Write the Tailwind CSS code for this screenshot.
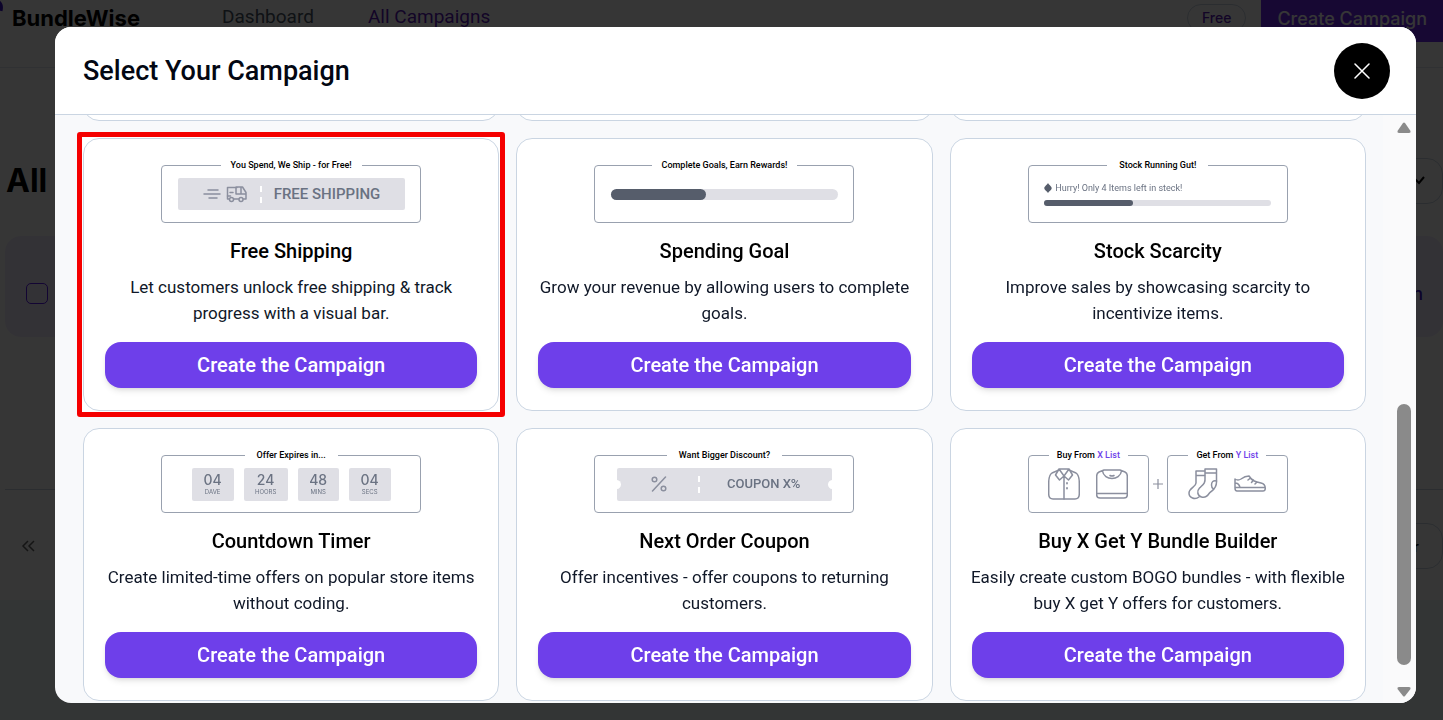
<!DOCTYPE html>
<html lang="en">

<head>
  <meta charset="UTF-8" />
  <meta name="viewport" content="width=device-width, initial-scale=1.0" />
  <title>BundleWise - All Campaigns</title>
  <script src="https://cdn.jsdelivr.net/npm/@tailwindcss/browser@4"></script>
</head>

<body class="h-screen overflow-hidden bg-[#f2f8fa] font-['Inter','Liberation_Sans',sans-serif] text-black">

  <!-- Page behind the modal -->
  <header class="flex h-[68px] items-start border-b border-slate-200 bg-white">
    <svg class="h-4 w-3 shrink-0" viewBox="0 0 12 16" fill="none" stroke="#3b12c9" stroke-width="3"><path d="M-2 1C1 3 2 7 1 11" /></svg>
    <a href="#" class="pt-1 text-[22px] leading-7 font-bold">BundleWise</a>
    <nav class="ml-[82px] flex gap-[54px] pt-1 font-['Roboto',sans-serif] text-[19px] leading-[26px]">
      <a href="#" class="text-gray-600">Dashboard</a>
      <a href="#" class="text-[#5b18b8]">All Campaigns</a>
    </nav>
    <span class="mt-1 mr-[15px] ml-auto rounded-full border border-slate-300 px-[14px] text-[14px] leading-[26px] font-medium text-[#5b18b8]">Free</span>
    <button class="h-[42px] bg-[#6d28f0] px-4 pb-[6px] text-[18px] font-medium text-white">Create Campaign</button>
  </header>

  <main class="h-[532px] bg-white">
    <div class="flex items-center justify-between pt-[89px] pl-[6px]">
      <h1 class="text-[32px] leading-[48px] font-bold">All</h1>
      <button aria-label="Filter" class="flex h-[46px] w-28 items-center justify-end rounded-2xl border border-slate-300 pr-4">
        <svg class="h-3 w-3" viewBox="0 0 12 12" fill="none" stroke="currentColor" stroke-width="2"><path d="M1 4l4 4 5-6" /></svg>
      </button>
    </div>
    <div class="mt-[31px] ml-[5px] flex h-[101px] items-center justify-between rounded-2xl bg-[#f2ecff] pt-[13px] pl-[21px]">
      <input type="checkbox" aria-label="Select campaign" class="h-[21px] w-[22px] appearance-none rounded-[5px] border border-[#5b18f0]" />
      <a href="#" class="pr-5 text-[18px] font-medium text-[#3b12c9]">Campaign</a>
    </div>
    <div class="mt-[152px] ml-[5px] flex items-center justify-between border-t border-slate-300 pt-[33px] pl-4">
      <button aria-label="First page">
        <svg class="h-4 w-4" viewBox="0 0 16 16" fill="none" stroke="#666" stroke-width="1.5"><path d="M7 3L2 8l5 5M13 3L8 8l5 5" /></svg>
      </button>
      <button class="h-[46px] rounded-2xl border border-slate-300 pr-[23px] pl-6 text-[14px] font-medium">Filter</button>
    </div>
  </main>

  <!-- Modal -->
  <div class="fixed inset-0 bg-black/79 pt-[27px] pr-[27px] pb-[17px] pl-[55px] font-['Roboto','Liberation_Sans',sans-serif]">
    <section role="dialog" aria-labelledby="modal-title" class="flex h-full flex-col overflow-hidden rounded-2xl bg-[#f8f9fb]">
      <div class="flex h-[88px] shrink-0 items-center justify-between border-b border-slate-300 bg-white pr-[26px] pl-7">
        <h2 id="modal-title" class="text-[27px] leading-8 font-medium text-gray-950">Select Your Campaign</h2>
        <button aria-label="Close" class="flex h-14 w-14 items-center justify-center rounded-full bg-black text-white">
          <svg class="h-4 w-4" viewBox="0 0 16 16" fill="none" stroke="currentColor" stroke-width="1.5" stroke-linecap="round"><path d="M1 1l14 14M15 1L1 15" /></svg>
        </button>
      </div>

      <div class="flex min-h-0 flex-1">
        <div class="flex flex-1 flex-col justify-end overflow-hidden pr-[17px] pb-[2px] pl-7">
          <div class="grid grid-cols-3 gap-x-[17px] gap-y-[17px]">

            <!-- Row scrolled out of view -->
            <div class="h-[273px] rounded-2xl border border-slate-300 bg-white"></div>
            <div class="h-[273px] rounded-2xl border border-slate-300 bg-white"></div>
            <div class="h-[273px] rounded-2xl border border-slate-300 bg-white"></div>

            <!-- Free Shipping -->
            <div class="relative">
              <div class="absolute -inset-[6px] rounded-[3px] border-[5px] border-[#f50000] bg-white"></div>
              <article class="relative flex flex-col items-center rounded-2xl border border-slate-300 bg-white px-[21px] pt-[26px] pb-[22px] text-center">
                <div class="relative flex h-[58px] w-[260px] items-center justify-center rounded-[4px] border border-gray-400">
                  <p class="absolute -top-[7px] bg-white px-[10px] text-[9px] leading-3 font-medium whitespace-nowrap">You Spend, We Ship - for Free!</p>
                  <div class="flex h-8 w-[227px] items-center rounded-[2px] bg-[#dfdfe5] pl-[25px] text-gray-500">
                    <svg class="h-5 w-[45px]" viewBox="0 0 45 20" fill="none" stroke="#8b8f9e" stroke-width="1.5" stroke-linecap="round" stroke-linejoin="round">
                      <path d="M5 6h10M1 10h16M6 14h8" />
                      <path d="M26 15h-1.500V3.500H34M31 15h4.500M40.500 15H43V8.500L39.500 3H33v7h10M38 3.500V10" />
                      <path d="M27 8.500h3M24.500 12h3" />
                      <circle cx="28.500" cy="15.500" r="2" /><circle cx="38" cy="15.500" r="2" />
                    </svg>
                    <span class="ml-3 h-[17px] border-l-2 border-dashed border-white"></span>
                    <span class="ml-3 text-[15px] leading-5 font-medium">FREE SHIPPING</span>
                  </div>
                </div>
                <h3 class="mt-[14px] text-[20px] leading-7 font-medium">Free Shipping</h3>
                <p class="-mx-2 mt-[9px] text-[17px] leading-[26px] text-gray-900">Let customers unlock free shipping &amp; track progress with a visual bar.</p>
                <button class="mt-4 h-[46px] w-full rounded-2xl bg-[#6e3fea] text-[20px] font-medium text-white shadow-md">Create the Campaign</button>
              </article>
            </div>

            <!-- Spending Goal -->
            <article class="flex flex-col items-center rounded-2xl border border-slate-300 bg-white px-[21px] pt-[26px] pb-[22px] text-center">
              <div class="relative flex h-[58px] w-[260px] items-center justify-center rounded-[4px] border border-gray-400">
                <p class="absolute -top-[7px] bg-white px-[10px] text-[9px] leading-3 font-medium whitespace-nowrap">Complete Goals, Earn Rewards!</p>
                <div class="h-[11px] w-[227px] rounded-full bg-[#dfdfe5]">
                  <div class="h-full rounded-full bg-[#565d6b]" style="width: 42%"></div>
                </div>
              </div>
              <h3 class="mt-[14px] text-[20px] leading-7 font-medium">Spending Goal</h3>
              <p class="-mx-2 mt-[9px] text-[17px] leading-[26px] text-gray-900">Grow your revenue by allowing users to complete goals.</p>
              <button class="mt-4 h-[46px] w-full rounded-2xl bg-[#6e3fea] text-[20px] font-medium text-white shadow-md">Create the Campaign</button>
            </article>

            <!-- Stock Scarcity -->
            <article class="flex flex-col items-center rounded-2xl border border-slate-300 bg-white px-[21px] pt-[26px] pb-[22px] text-center">
              <div class="relative flex h-[58px] w-[260px] flex-col items-center rounded-[4px] border border-gray-400 pt-4">
                <p class="absolute -top-[7px] bg-white px-[12px] text-[9px] leading-3 font-medium whitespace-nowrap">Stock Running Gut!</p>
                <p class="flex w-[227px] items-center gap-[3px] text-[9px] leading-3 text-gray-500">
                  <svg class="h-[10px] w-2" viewBox="0 0 8 10" fill="#565d6b"><path d="M4 0C5 2 8 3.500 7.700 5.500C7.300 7.500 5 8 4 10C3 8 .700 7.500 .3 5.500C0 3.500 3 2 4 0z" /></svg>
                  Hurry! Only 4 Items left in steck!
                </p>
                <div class="mt-[6px] h-[6px] w-[227px] rounded-full bg-[#dfdfe5]">
                  <div class="h-full rounded-full bg-[#565d6b]" style="width: 39%"></div>
                </div>
              </div>
              <h3 class="mt-[14px] text-[20px] leading-7 font-medium">Stock Scarcity</h3>
              <p class="-mx-2 mt-[9px] text-[17px] leading-[26px] text-gray-900">Improve sales by showcasing scarcity to incentivize items.</p>
              <button class="mt-4 h-[46px] w-full rounded-2xl bg-[#6e3fea] text-[20px] font-medium text-white shadow-md">Create the Campaign</button>
            </article>

            <!-- Countdown Timer -->
            <article class="flex flex-col items-center rounded-2xl border border-slate-300 bg-white px-[21px] pt-[26px] pb-[22px] text-center">
              <div class="relative flex h-[58px] w-[260px] items-center justify-center gap-[10px] rounded-[4px] border border-gray-400">
                <p class="absolute -top-[7px] bg-white px-[12px] text-[9px] leading-3 font-medium whitespace-nowrap">Offer Expires in...</p>
                <div class="flex h-[33px] w-[42px] flex-col items-center justify-center rounded-[2px] bg-[#dfdfe5] font-['Inter',sans-serif] text-gray-500">
                  <span class="text-[14px] leading-4 font-medium">04</span>
                  <span class="text-[6px] leading-[8px]">DAVE</span>
                </div>
                <div class="flex h-[33px] w-[44px] flex-col items-center justify-center rounded-[2px] bg-[#dfdfe5] font-['Inter',sans-serif] text-gray-500">
                  <span class="text-[14px] leading-4 font-medium">24</span>
                  <span class="text-[6px] leading-[8px]">HOORS</span>
                </div>
                <div class="flex h-[33px] w-[41px] flex-col items-center justify-center rounded-[2px] bg-[#dfdfe5] font-['Inter',sans-serif] text-gray-500">
                  <span class="text-[14px] leading-4 font-medium">48</span>
                  <span class="text-[6px] leading-[8px]">MINS</span>
                </div>
                <div class="flex h-[33px] w-[42px] flex-col items-center justify-center rounded-[2px] bg-[#dfdfe5] font-['Inter',sans-serif] text-gray-500">
                  <span class="text-[14px] leading-4 font-medium">04</span>
                  <span class="text-[6px] leading-[8px]">SECS</span>
                </div>
              </div>
              <h3 class="mt-[14px] text-[20px] leading-7 font-medium">Countdown Timer</h3>
              <p class="-mx-2 mt-[9px] text-[17px] leading-[26px] text-gray-900">Create limited-time offers on popular store items without coding.</p>
              <button class="mt-4 h-[46px] w-full rounded-2xl bg-[#6e3fea] text-[20px] font-medium text-white shadow-md">Create the Campaign</button>
            </article>

            <!-- Next Order Coupon -->
            <article class="flex flex-col items-center rounded-2xl border border-slate-300 bg-white px-[21px] pt-[26px] pb-[22px] text-center">
              <div class="relative flex h-[58px] w-[260px] items-center justify-center rounded-[4px] border border-gray-400">
                <p class="absolute -top-[7px] bg-white px-[12px] text-[9px] leading-3 font-medium whitespace-nowrap">Want Bigger Discount?</p>
                <div class="relative flex h-[33px] w-[215px] items-center overflow-hidden rounded-[2px] bg-[#dfdfe5] pl-[34px]">
                  <span class="absolute top-[12px] -left-[5px] h-[9px] w-[9px] rounded-full bg-white"></span>
                  <span class="absolute top-[12px] -right-[5px] h-[9px] w-[9px] rounded-full bg-white"></span>
                  <svg class="h-4 w-4" viewBox="0 0 16 16" fill="none" stroke="#8b8f9e" stroke-width="1.500" stroke-linecap="round"><path d="M14.500 1L1.500 15" /><circle cx="3.500" cy="3.500" r="2.300" /><circle cx="12.500" cy="12.500" r="2.300" /></svg>
                  <span class="ml-[31px] h-[17px] border-l-2 border-dashed border-white"></span>
                  <span class="ml-[27px] text-[13px] leading-5 font-medium text-gray-500">COUPON X%</span>
                </div>
              </div>
              <h3 class="mt-[14px] text-[20px] leading-7 font-medium">Next Order Coupon</h3>
              <p class="-mx-2 mt-[9px] text-[17px] leading-[26px] text-gray-900">Offer incentives - offer coupons to returning customers.</p>
              <button class="mt-4 h-[46px] w-full rounded-2xl bg-[#6e3fea] text-[20px] font-medium text-white shadow-md">Create the Campaign</button>
            </article>

            <!-- Buy X Get Y -->
            <article class="flex flex-col items-center rounded-2xl border border-slate-300 bg-white px-[21px] pt-[26px] pb-[22px] text-center">
              <div class="flex w-[260px] items-center justify-between">
                <div class="relative flex h-[58px] w-[121px] items-center justify-center gap-4 rounded-[4px] border border-gray-400">
                  <p class="absolute -top-[7px] bg-white px-[8px] text-[9px] leading-3 font-medium whitespace-nowrap">Buy From <span class="text-[#6e3fea]">X List</span></p>
                  <svg class="h-[34px] w-8" viewBox="0 0 32 34" fill="none" stroke="#8b8f9e" stroke-width="1.500" stroke-linecap="round" stroke-linejoin="round">
                    <path d="M11 3L4 6C1 8 .700 12 .700 16V27Q.700 32 5 32H27Q31.300 32 31.300 27V16C31.300 12 31 8 28 6L21 3" />
                    <path d="M11 2h10l-5 7zM11 2L7.500 8l4 5L16 9l4.500 4 4-5L21 2M16 9v23" />
                    <path d="M19 16v.5M19 21v.5" stroke-width="1.800" />
                  </svg>
                  <svg class="h-[34px] w-8" viewBox="0 0 32 34" fill="none" stroke="#8b8f9e" stroke-width="1.500" stroke-linecap="round" stroke-linejoin="round">
                    <path d="M8 3L3 5Q.700 6 .700 9V28Q.700 31 4 31H28Q31.300 31 31.300 28V9Q31.300 6 29 5L24 3zM.700 26.500H31.300M6.500 4C8 14 24 14 25.500 4M14 8.500q2 1.200 4 0" />
                  </svg>
                </div>
                <svg class="h-[10px] w-[10px]" viewBox="0 0 10 10" stroke="#8b8f9e" stroke-width="1.200"><path d="M5 0v10M0 5h10" /></svg>
                <div class="relative flex h-[58px] w-[121px] items-center justify-center gap-4 rounded-[4px] border border-gray-400">
                  <p class="absolute -top-[7px] bg-white px-[8px] text-[9px] leading-3 font-medium whitespace-nowrap">Get From <span class="text-[#6e3fea]">Y List</span></p>
                  <svg class="h-[34px] w-[30px]" viewBox="0 0 30 34" fill="none" stroke="#8b8f9e" stroke-width="1.500" stroke-linecap="round" stroke-linejoin="round">
                    <path d="M17 2h11.500v13c0 7-4 8-7 11c-2 3-5 5-8 4c-4-1-5-6-2-9c4-4 6-5 5.500-10zM17 6h11.500" />
                    <path d="M16.500 4H8v12c0 4-7 5-7 10c0 5 6 7 10 4M8 8.500h8.500M28.500 14q-5-1-5 4q0 3 2 4" />
                  </svg>
                  <svg class="h-[34px] w-8" viewBox="0 0 32 34" fill="none" stroke="#8b8f9e" stroke-width="1.500" stroke-linecap="round" stroke-linejoin="round">
                    <path d="M1 12q3 2 6 0q4-3 8-3c3 5 7 6 12 7c4 1 4.500 3 4.200 6q-.2 2-2.200 2H3q-2 0-2-3zM1 20.500H31M1 16q4 0 5 4.500M14 13l2.500-2M17.500 15.500l2-2.500M21 17l2-2" />
                  </svg>
                </div>
              </div>
              <h3 class="mt-[14px] text-[20px] leading-7 font-medium">Buy X Get Y Bundle Builder</h3>
              <p class="-mx-2 mt-[9px] text-[17px] leading-[26px] text-gray-900">Easily create custom BOGO bundles - with flexible buy X get Y offers for customers.</p>
              <button class="mt-4 h-[46px] w-full rounded-2xl bg-[#6e3fea] text-[20px] font-medium text-white shadow-md">Create the Campaign</button>
            </article>
          </div>
        </div>

        <!-- Scrollbar -->
        <div class="flex w-[33px] flex-col items-center bg-[#fafafb] pt-[7px] pr-[5px] pb-[6px] pl-[13px]">
          <svg class="h-[11px] w-[14px]" viewBox="0 0 14 11" fill="#8a8a8a"><path d="M6 1Q7 0 8 1L13.500 9Q14 11 12 11H2Q0 11 .5 9z" /></svg>
          <div class="flex w-full flex-1 flex-col justify-end pb-[22px]">
            <div class="mx-auto h-[49%] w-[14px] rounded-full bg-[#8a8a8a]"></div>
          </div>
          <svg class="h-[10px] w-[14px]" viewBox="0 0 14 10" fill="#8a8a8a"><path d="M6 9Q7 10 8 9L13.500 2Q14 0 12 0H2Q0 0 .5 2z" /></svg>
        </div>
      </div>
    </section>
  </div>

</body>

</html>
